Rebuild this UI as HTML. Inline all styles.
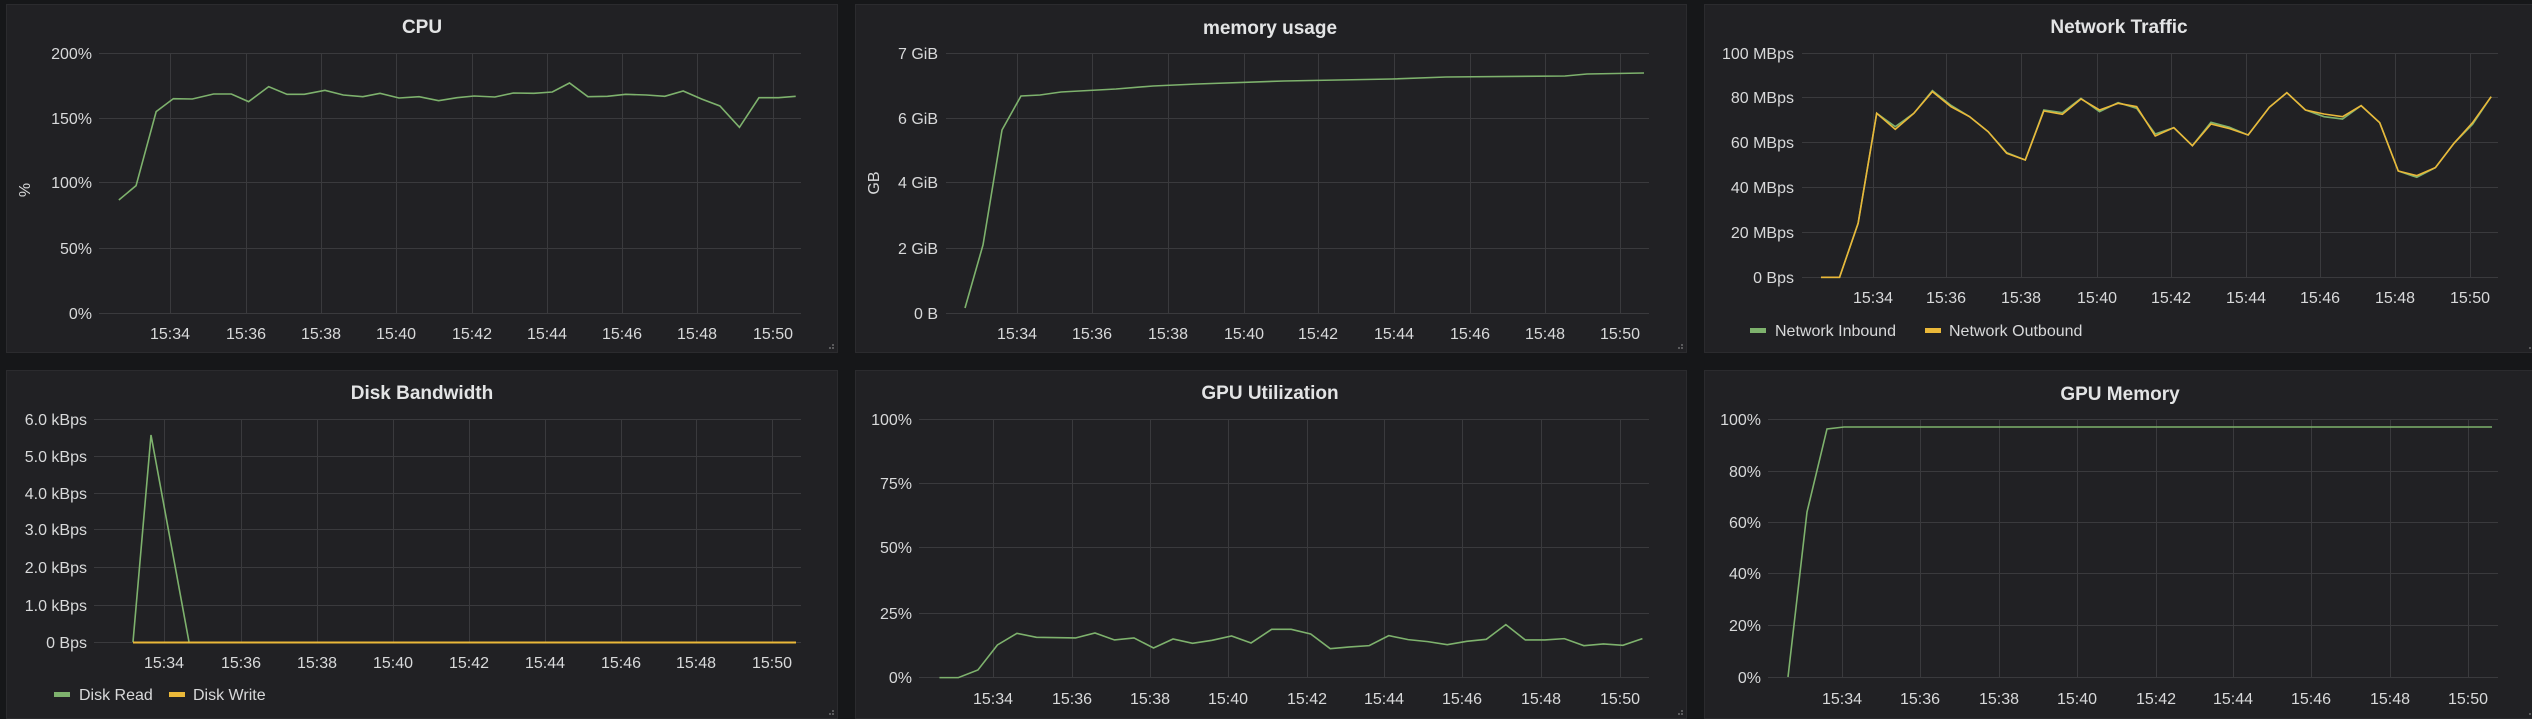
<!DOCTYPE html>
<html><head><meta charset="utf-8"><style>
html,body{margin:0;padding:0;background:#161719;width:2532px;height:719px;overflow:hidden}
svg{display:block;font-family:"Liberation Sans",sans-serif}
.p{fill:#212124;stroke:#2b2b2e;stroke-width:1}
.t{fill:#e3e4e5;font-size:19px;font-weight:bold;text-anchor:middle}
.g line{stroke:#3a3a3d;stroke-width:1}
.yl text{fill:#d8d9da;font-size:16px;text-anchor:end}
.xl text{fill:#d8d9da;font-size:16px;text-anchor:middle}
.lg{fill:#d8d9da;font-size:16px}
.ln{fill:none;stroke:#7eb26d;stroke-width:1.6}
.ly{fill:none;stroke:#eab839;stroke-width:1.6}
.d{fill:#5a5a5c}
</style></head><body>
<svg width="2532" height="719" viewBox="0 0 2532 719">
<rect class="p" x="6.5" y="4.5" width="831" height="348"/>
<rect class="p" x="855.5" y="4.5" width="831" height="348"/>
<rect class="p" x="1704.5" y="4.5" width="840" height="348"/>
<rect class="p" x="6.5" y="370.5" width="831" height="348"/>
<rect class="p" x="855.5" y="370.5" width="831" height="348"/>
<rect class="p" x="1704.5" y="370.5" width="840" height="348"/>

<!-- CPU -->
<text class="t" x="422" y="33">CPU</text>
<g class="g">
<line x1="99" x2="801" y1="53.5" y2="53.5"/><line x1="99" x2="801" y1="118.5" y2="118.5"/><line x1="99" x2="801" y1="182.5" y2="182.5"/><line x1="99" x2="801" y1="248.5" y2="248.5"/><line x1="99" x2="801" y1="313.5" y2="313.5"/>
<line x1="170.5" x2="170.5" y1="53" y2="313"/><line x1="246.5" x2="246.5" y1="53" y2="313"/><line x1="321.5" x2="321.5" y1="53" y2="313"/><line x1="396.5" x2="396.5" y1="53" y2="313"/><line x1="472.5" x2="472.5" y1="53" y2="313"/><line x1="547.5" x2="547.5" y1="53" y2="313"/><line x1="622.5" x2="622.5" y1="53" y2="313"/><line x1="697.5" x2="697.5" y1="53" y2="313"/><line x1="773.5" x2="773.5" y1="53" y2="313"/>
</g>
<g class="yl"><text x="92" y="59">200%</text><text x="92" y="124">150%</text><text x="92" y="188">100%</text><text x="92" y="254">50%</text><text x="92" y="319">0%</text></g>
<g class="xl"><text x="170" y="339">15:34</text><text x="246" y="339">15:36</text><text x="321" y="339">15:38</text><text x="396" y="339">15:40</text><text x="472" y="339">15:42</text><text x="547" y="339">15:44</text><text x="622" y="339">15:46</text><text x="697" y="339">15:48</text><text x="773" y="339">15:50</text></g>
<text class="lg" transform="translate(30,190) rotate(-90)" text-anchor="middle">%</text>
<g transform="scale(0.5741,0.3333)"><polyline class="ln" vector-effect="non-scaling-stroke" points="207,600 237,557 272,335 302,296 335,297 372,282 403,282 433,305 468,260 500,283 530,283 566,271 598,285 632,290 662,280 695,294 730,290 764,302 796,293 826,288 862,291 894,279 930,280 962,276 992,249 1024,290 1058,289 1090,283 1126,285 1158,289 1190,273 1222,297 1254,318 1288,382 1322,293 1356,293 1386,289"/></g>

<!-- Memory -->
<text class="t" x="1270" y="34">memory usage</text>
<g class="g">
<line x1="946" x2="1649" y1="53.5" y2="53.5"/><line x1="946" x2="1649" y1="118.5" y2="118.5"/><line x1="946" x2="1649" y1="182.5" y2="182.5"/><line x1="946" x2="1649" y1="248.5" y2="248.5"/><line x1="946" x2="1649" y1="313.5" y2="313.5"/>
<line x1="1017.5" x2="1017.5" y1="53" y2="313"/><line x1="1092.5" x2="1092.5" y1="53" y2="313"/><line x1="1168.5" x2="1168.5" y1="53" y2="313"/><line x1="1244.5" x2="1244.5" y1="53" y2="313"/><line x1="1318.5" x2="1318.5" y1="53" y2="313"/><line x1="1394.5" x2="1394.5" y1="53" y2="313"/><line x1="1470.5" x2="1470.5" y1="53" y2="313"/><line x1="1545.5" x2="1545.5" y1="53" y2="313"/><line x1="1620.5" x2="1620.5" y1="53" y2="313"/>
</g>
<g class="yl"><text x="938" y="59">7 GiB</text><text x="938" y="124">6 GiB</text><text x="938" y="188">4 GiB</text><text x="938" y="254">2 GiB</text><text x="938" y="319">0 B</text></g>
<g class="xl"><text x="1017" y="339">15:34</text><text x="1092" y="339">15:36</text><text x="1168" y="339">15:38</text><text x="1244" y="339">15:40</text><text x="1318" y="339">15:42</text><text x="1394" y="339">15:44</text><text x="1470" y="339">15:46</text><text x="1545" y="339">15:48</text><text x="1620" y="339">15:50</text></g>
<text class="lg" transform="translate(879,183) rotate(-90)" text-anchor="middle">GB</text>
<polyline class="ln" points="965,308 983,245 1002,130 1021,96 1040,95 1061,92 1116,89 1153,86 1197,84 1284,81 1392,79 1446,77 1565,76 1587,74 1644,73"/>

<!-- Network -->
<text class="t" x="2119" y="33">Network Traffic</text>
<g class="g">
<line x1="1802" x2="2498" y1="53.5" y2="53.5"/><line x1="1802" x2="2498" y1="97.5" y2="97.5"/><line x1="1802" x2="2498" y1="142.5" y2="142.5"/><line x1="1802" x2="2498" y1="187.5" y2="187.5"/><line x1="1802" x2="2498" y1="232.5" y2="232.5"/><line x1="1802" x2="2498" y1="277.5" y2="277.5"/>
<line x1="1873.5" x2="1873.5" y1="53" y2="277"/><line x1="1946.5" x2="1946.5" y1="53" y2="277"/><line x1="2021.5" x2="2021.5" y1="53" y2="277"/><line x1="2097.5" x2="2097.5" y1="53" y2="277"/><line x1="2171.5" x2="2171.5" y1="53" y2="277"/><line x1="2246.5" x2="2246.5" y1="53" y2="277"/><line x1="2320.5" x2="2320.5" y1="53" y2="277"/><line x1="2395.5" x2="2395.5" y1="53" y2="277"/><line x1="2470.5" x2="2470.5" y1="53" y2="277"/>
</g>
<g class="yl"><text x="1794" y="59">100 MBps</text><text x="1794" y="103">80 MBps</text><text x="1794" y="148">60 MBps</text><text x="1794" y="193">40 MBps</text><text x="1794" y="238">20 MBps</text><text x="1794" y="283">0 Bps</text></g>
<g class="xl"><text x="1873" y="303">15:34</text><text x="1946" y="303">15:36</text><text x="2021" y="303">15:38</text><text x="2097" y="303">15:40</text><text x="2171" y="303">15:42</text><text x="2246" y="303">15:44</text><text x="2320" y="303">15:46</text><text x="2395" y="303">15:48</text><text x="2470" y="303">15:50</text></g>
<g transform="translate(1700,0) scale(0.5306,0.3333)">
<polyline class="ln" vector-effect="non-scaling-stroke" points="228,832 263,832 298,670 333,340 368,380 403,340 438,272 473,316 508,350 543,395 578,458 613,480 648,330 683,338 718,295 753,335 788,308 823,325 858,402 893,383 928,437 963,367 998,382 1033,405 1073,322 1106,278 1141,330 1176,350 1211,357 1246,317 1281,368 1316,513 1351,532 1386,503 1421,430 1456,373 1491,290"/>
<polyline class="ly" vector-effect="non-scaling-stroke" points="228,832 263,832 298,670 333,340 368,388 403,340 438,275 473,320 508,350 543,395 578,460 613,480 648,333 683,343 718,297 753,330 788,310 823,320 858,408 893,383 928,437 963,372 998,386 1033,405 1073,322 1106,278 1141,330 1176,342 1211,350 1246,317 1281,368 1316,513 1351,527 1386,503 1421,430 1456,368 1491,290"/>
</g>
<rect x="1750" y="328" width="16" height="5" fill="#7eb26d"/><text class="lg" x="1775" y="336">Network Inbound</text>
<rect x="1925" y="328" width="16" height="5" fill="#eab839"/><text class="lg" x="1949" y="336">Network Outbound</text>

<!-- Disk -->
<text class="t" x="422" y="399">Disk Bandwidth</text>
<g class="g">
<line x1="94" x2="801" y1="419.5" y2="419.5"/><line x1="94" x2="801" y1="456.5" y2="456.5"/><line x1="94" x2="801" y1="493.5" y2="493.5"/><line x1="94" x2="801" y1="529.5" y2="529.5"/><line x1="94" x2="801" y1="567.5" y2="567.5"/><line x1="94" x2="801" y1="605.5" y2="605.5"/><line x1="94" x2="801" y1="642.5" y2="642.5"/>
<line x1="164.5" x2="164.5" y1="419" y2="642"/><line x1="241.5" x2="241.5" y1="419" y2="642"/><line x1="317.5" x2="317.5" y1="419" y2="642"/><line x1="393.5" x2="393.5" y1="419" y2="642"/><line x1="469.5" x2="469.5" y1="419" y2="642"/><line x1="545.5" x2="545.5" y1="419" y2="642"/><line x1="621.5" x2="621.5" y1="419" y2="642"/><line x1="696.5" x2="696.5" y1="419" y2="642"/><line x1="772.5" x2="772.5" y1="419" y2="642"/>
</g>
<g class="yl"><text x="87" y="425">6.0 kBps</text><text x="87" y="462">5.0 kBps</text><text x="87" y="499">4.0 kBps</text><text x="87" y="535">3.0 kBps</text><text x="87" y="573">2.0 kBps</text><text x="87" y="611">1.0 kBps</text><text x="87" y="648">0 Bps</text></g>
<g class="xl"><text x="164" y="668">15:34</text><text x="241" y="668">15:36</text><text x="317" y="668">15:38</text><text x="393" y="668">15:40</text><text x="469" y="668">15:42</text><text x="545" y="668">15:44</text><text x="621" y="668">15:46</text><text x="696" y="668">15:48</text><text x="772" y="668">15:50</text></g>
<polyline class="ln" points="133,642 151,435 189,642"/>
<line x1="133" x2="796" y1="642.5" y2="642.5" stroke="#eab839" stroke-width="2"/>
<rect x="54" y="692" width="16" height="5" fill="#7eb26d"/><text class="lg" x="79" y="700">Disk Read</text>
<rect x="169" y="692" width="16" height="5" fill="#eab839"/><text class="lg" x="193" y="700">Disk Write</text>

<!-- GPU Util -->
<text class="t" x="1270" y="399">GPU Utilization</text>
<g class="g">
<line x1="919" x2="1649" y1="419.5" y2="419.5"/><line x1="919" x2="1649" y1="483.5" y2="483.5"/><line x1="919" x2="1649" y1="547.5" y2="547.5"/><line x1="919" x2="1649" y1="613.5" y2="613.5"/><line x1="919" x2="1649" y1="677.5" y2="677.5"/>
<line x1="993.5" x2="993.5" y1="419" y2="677"/><line x1="1072.5" x2="1072.5" y1="419" y2="677"/><line x1="1150.5" x2="1150.5" y1="419" y2="677"/><line x1="1228.5" x2="1228.5" y1="419" y2="677"/><line x1="1307.5" x2="1307.5" y1="419" y2="677"/><line x1="1384.5" x2="1384.5" y1="419" y2="677"/><line x1="1462.5" x2="1462.5" y1="419" y2="677"/><line x1="1541.5" x2="1541.5" y1="419" y2="677"/><line x1="1620.5" x2="1620.5" y1="419" y2="677"/>
</g>
<g class="yl"><text x="912" y="425">100%</text><text x="912" y="489">75%</text><text x="912" y="553">50%</text><text x="912" y="619">25%</text><text x="912" y="683">0%</text></g>
<g class="xl"><text x="993" y="704">15:34</text><text x="1072" y="704">15:36</text><text x="1150" y="704">15:38</text><text x="1228" y="704">15:40</text><text x="1307" y="704">15:42</text><text x="1384" y="704">15:44</text><text x="1462" y="704">15:46</text><text x="1541" y="704">15:48</text><text x="1620" y="704">15:50</text></g>
<g transform="translate(850,360) scale(0.542,0.3333)"><polyline class="ln" vector-effect="non-scaling-stroke" points="165,953 200,953 236,930 272,855 308,820 344,832 416,834 452,819 488,840 524,834 560,864 596,837 632,850 668,841 704,828 740,849 778,808 814,808 850,822 886,866 922,861 958,857 994,827 1030,839 1066,845 1102,854 1138,844 1174,838 1210,794 1246,840 1282,840 1318,836 1354,857 1390,852 1426,856 1462,836"/></g>

<!-- GPU Memory -->
<text class="t" x="2120" y="400">GPU Memory</text>
<g class="g">
<line x1="1768" x2="2498" y1="419.5" y2="419.5"/><line x1="1768" x2="2498" y1="471.5" y2="471.5"/><line x1="1768" x2="2498" y1="522.5" y2="522.5"/><line x1="1768" x2="2498" y1="573.5" y2="573.5"/><line x1="1768" x2="2498" y1="625.5" y2="625.5"/><line x1="1768" x2="2498" y1="677.5" y2="677.5"/>
<line x1="1842.5" x2="1842.5" y1="419" y2="677"/><line x1="1920.5" x2="1920.5" y1="419" y2="677"/><line x1="1999.5" x2="1999.5" y1="419" y2="677"/><line x1="2077.5" x2="2077.5" y1="419" y2="677"/><line x1="2156.5" x2="2156.5" y1="419" y2="677"/><line x1="2233.5" x2="2233.5" y1="419" y2="677"/><line x1="2311.5" x2="2311.5" y1="419" y2="677"/><line x1="2390.5" x2="2390.5" y1="419" y2="677"/><line x1="2468.5" x2="2468.5" y1="419" y2="677"/>
</g>
<g class="yl"><text x="1761" y="425">100%</text><text x="1761" y="477">80%</text><text x="1761" y="528">60%</text><text x="1761" y="579">40%</text><text x="1761" y="631">20%</text><text x="1761" y="683">0%</text></g>
<g class="xl"><text x="1842" y="704">15:34</text><text x="1920" y="704">15:36</text><text x="1999" y="704">15:38</text><text x="2077" y="704">15:40</text><text x="2156" y="704">15:42</text><text x="2233" y="704">15:44</text><text x="2311" y="704">15:46</text><text x="2390" y="704">15:48</text><text x="2468" y="704">15:50</text></g>
<polyline class="ln" points="1788,677 1807,512 1827,429 1844,427 2492,427"/>

<!-- resize handles -->
<g class="d">
<rect x="832" y="347" width="2" height="2"/><rect x="829" y="347" width="2" height="2"/><rect x="832" y="344" width="2" height="2"/>
<rect x="1681" y="347" width="2" height="2"/><rect x="1678" y="347" width="2" height="2"/><rect x="1681" y="344" width="2" height="2"/>
<rect x="832" y="713" width="2" height="2"/><rect x="829" y="713" width="2" height="2"/><rect x="832" y="710" width="2" height="2"/>
<rect x="1681" y="713" width="2" height="2"/><rect x="1678" y="713" width="2" height="2"/><rect x="1681" y="710" width="2" height="2"/>
<rect x="2529" y="347" width="2" height="2"/><rect x="2529" y="713" width="2" height="2"/>
</g>
</svg>
</body></html>
